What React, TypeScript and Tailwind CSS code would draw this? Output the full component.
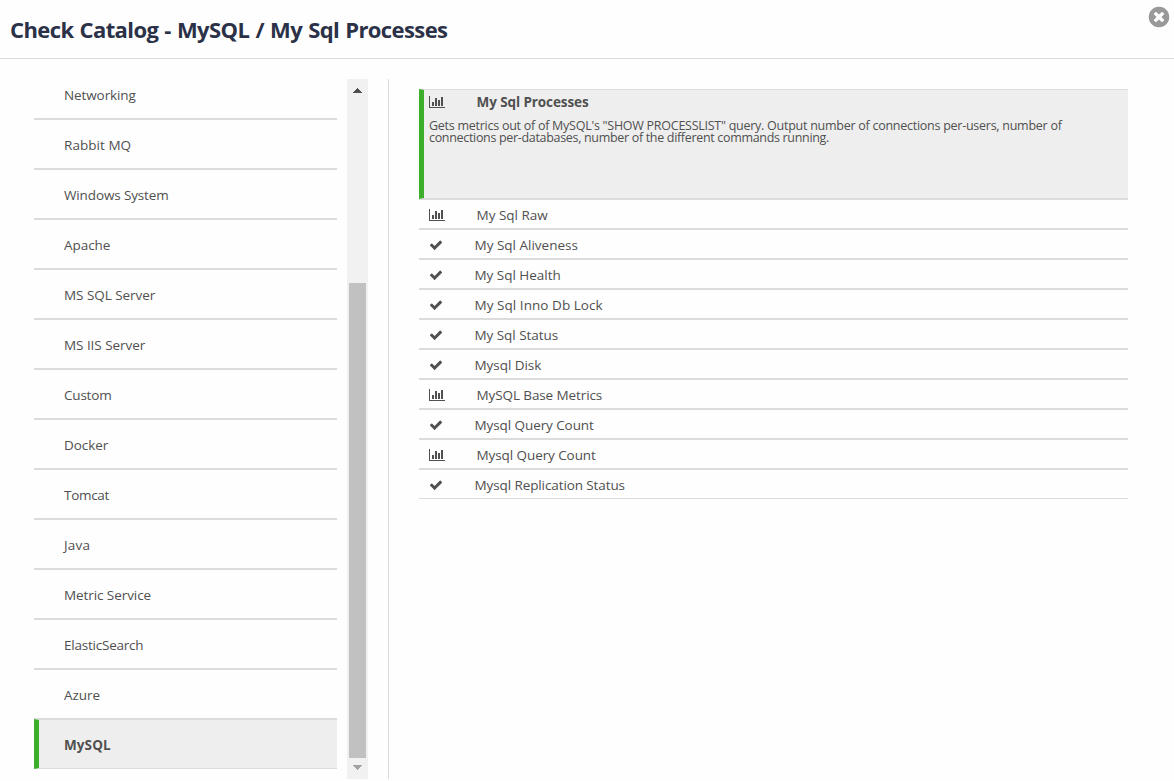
import React from "react";

type Kind = "chart" | "check";

const categories: { name: string; tracking: string }[] = [
  { name: "Networking", tracking: "tracking-[-0.1px]" },
  { name: "Rabbit MQ", tracking: "tracking-[0.05px]" },
  { name: "Windows System", tracking: "tracking-[-0.13px]" },
  { name: "Apache", tracking: "tracking-[-0.05px]" },
  { name: "MS SQL Server", tracking: "tracking-[-0.05px]" },
  { name: "MS IIS Server", tracking: "tracking-[-0.05px]" },
  { name: "Custom", tracking: "tracking-[-0.2px]" },
  { name: "Docker", tracking: "tracking-[-0.08px]" },
  { name: "Tomcat", tracking: "tracking-[-0.3px]" },
  { name: "Java", tracking: "tracking-[0.2px]" },
  { name: "Metric Service", tracking: "tracking-[-0.08px]" },
  { name: "ElasticSearch", tracking: "tracking-[-0.22px]" },
  { name: "Azure", tracking: "tracking-[-0.05px]" },
];

const checks: { name: string; kind: Kind; tracking: string }[] = [
  { name: "My Sql Raw", kind: "chart", tracking: "tracking-[0px]" },
  { name: "My Sql Aliveness", kind: "check", tracking: "tracking-[0px]" },
  { name: "My Sql Health", kind: "check", tracking: "tracking-[-0.02px]" },
  { name: "My Sql Inno Db Lock", kind: "check", tracking: "tracking-[0.05px]" },
  { name: "My Sql Status", kind: "check", tracking: "tracking-[-0.05px]" },
  { name: "Mysql Disk", kind: "check", tracking: "tracking-[-0.05px]" },
  { name: "MySQL Base Metrics", kind: "chart", tracking: "tracking-[-0.1px]" },
  { name: "Mysql Query Count", kind: "check", tracking: "tracking-[-0.08px]" },
  { name: "Mysql Query Count", kind: "chart", tracking: "tracking-[-0.08px]" },
  { name: "Mysql Replication Status", kind: "check", tracking: "tracking-[-0.1px]" },
];

function ChartIcon() {
  return (
    <svg viewBox="0 0 2048 1792" className="h-3.5 w-4 shrink-0 fill-current">
      <path d="M640 896v512h-256v-512h256zM1024 384v1024h-256v-1024h256zM2048 1536v128h-2048v-1536h128v1408h1920zM1408 640v768h-256v-768h256zM1792 256v1152h-256v-1152h256z" />
    </svg>
  );
}

function CheckIcon() {
  return (
    <svg viewBox="0 0 1792 1792" className="size-3.5 shrink-0 fill-current">
      <path d="M1671 566q0 40-28 68l-724 724-136 136q-28 28-68 28t-68-28l-136-136-362-362q-28-28-28-68t28-68l136-136q28-28 68-28t68 28l294 295 656-657q28-28 68-28t68 28l136 136q28 28 28 68z" />
    </svg>
  );
}

function CloseIcon() {
  return (
    <svg viewBox="0 0 1792 1792" className="size-6 fill-[#999999]">
      <path d="M1277 1122q0-26-19-45l-181-181 181-181q19-19 19-45 0-27-19-46l-90-90q-19-19-46-19-26 0-45 19l-181 181-181-181q-19-19-45-19-27 0-46 19l-90 90q-19 19-19 46 0 26 19 45l181 181-181 181q-19 19-19 45 0 27 19 46l90 90q19 19 46 19 26 0 45-19l181-181 181 181q19 19 45 19 27 0 46-19l90-90q19-19 19-46zm387-226q0 209-103 385.5t-279.5 279.5-385.5 103-385.5-103-279.5-279.5-103-385.5 103-385.5 279.5-279.5 385.5-103 385.5 103 279.5 279.5 103 385.5z" />
    </svg>
  );
}

function Sidebar() {
  return (
    <ul className="w-[303px] text-[13.5px] leading-5">
      {categories.map((c, i) => (
        <li
          key={c.name}
          className={`flex items-center border-b border-[#dcdcdc] pl-[30px] ${i === 0 ? "h-10 pb-[7px]" : "h-[50px] border-t pt-0.5"}`}
        >
          <span className={c.tracking}>{c.name}</span>
        </li>
      ))}
      <li className="flex h-[50px] items-center border-y border-l-[5px] border-y-[#dcdcdc] border-l-[#3dae2b] bg-[#eeeeee] pt-0.5 pl-[25px] font-bold">
        <span className="tracking-[0.1px]">MySQL</span>
      </li>
    </ul>
  );
}

function Scrollbar() {
  return (
    <div className="ml-2.5 flex h-[700px] w-[21px] flex-col items-center bg-[#f1f1f1]">
      <svg viewBox="0 0 9 5" className="mt-[9px] h-[5px] w-[9px] shrink-0 fill-[#505050]" shapeRendering="crispEdges">
        <path d="M4 0h1v1h1v1h1v1h1v1h1v1H0V4h1V3h1V2h1V1h1z" />
      </svg>
      <div className="mt-[190px] mr-px h-[475px] w-[17px] shrink-0 bg-[#c1c1c1]" />
      <svg viewBox="0 0 9 5" className="mt-[7px] h-[5px] w-[9px] shrink-0 fill-[#a3a3a3]" shapeRendering="crispEdges">
        <path d="M4 5h1V4h1V3h1V2h1V1h1V0H0v1h1v1h1v1h1v1h1z" />
      </svg>
    </div>
  );
}

export default function App() {
  return (
    <div className="flex h-[781px] w-[1174px] flex-col overflow-hidden bg-[#fefefe] font-['Open_Sans','Noto_Sans',sans-serif] text-[#505050]">
      <header className="flex h-[59px] shrink-0 items-start justify-between border-b border-[#dcdcdc] pl-2.5 pr-[3px]">
        <h1 className="pt-3.5 text-[22px] leading-[30px] font-bold whitespace-nowrap text-[#2b3147]">
          <span className="tracking-[-0.6px] [word-spacing:1px]">Check Catalog - MySQL / My Sql Processes</span>
        </h1>
        <button className="mt-[5px]" aria-label="Close">
          <CloseIcon />
        </button>
      </header>
      <main className="flex pt-5 pl-[34px]">
        <Sidebar />
        <Scrollbar />
        <section className="ml-5 h-[700px] w-[740px] border-l border-[#dcdcdc] pt-2.5 pl-[30px]">
          <article className="h-[110px] border-y border-l-[5px] border-y-[#dcdcdc] border-l-[#3dae2b] bg-[#eeeeee] pl-[5px]">
            <h2 className="flex h-6 items-center text-[13.5px] leading-5 font-bold">
              <ChartIcon />
              <span className="ml-[31.5px] tracking-[-0.09px]">My Sql Processes</span>
            </h2>
            <p className="pt-1.5 text-[12.5px] leading-3 whitespace-nowrap">
              <span className="tracking-[-0.26px]">
                Gets metrics out of of MySQL&#39;s &quot;SHOW PROCESSLIST&quot; query. Output number of connections per-users, number of
              </span>
              <br />
              <span className="tracking-[-0.32px]">connections per-databases, number of the different commands running.</span>
            </p>
          </article>
          <ul>
            {checks.map((c, i) => (
              <li key={i} className="flex h-[30px] items-center border-y border-[#dcdcdc] pt-0.5 pl-2.5 text-[13.5px] leading-5">
                {c.kind === "chart" ? <ChartIcon /> : <CheckIcon />}
                <span className={`ml-[31.5px] ${c.tracking}`}>{c.name}</span>
              </li>
            ))}
          </ul>
        </section>
      </main>
    </div>
  );
}
